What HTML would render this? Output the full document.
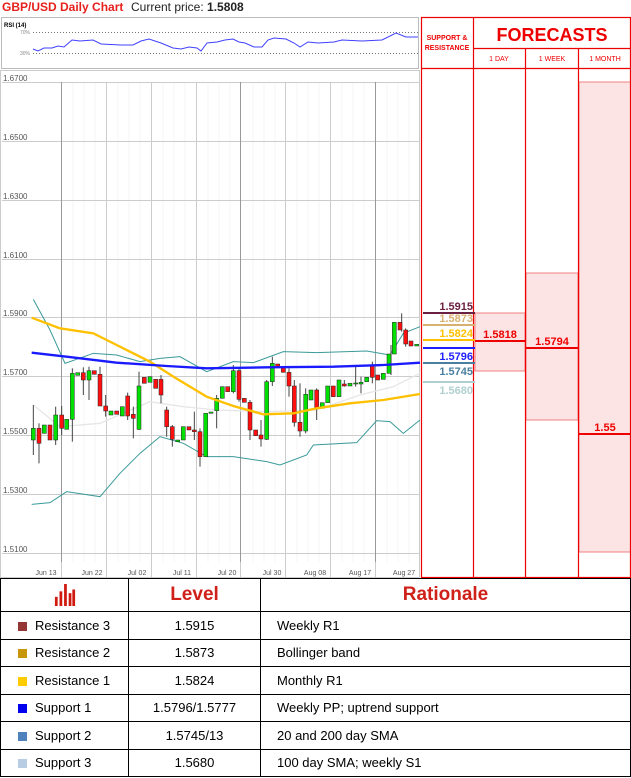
<!DOCTYPE html>
<html><head><meta charset="utf-8"><style>
*{margin:0;padding:0;box-sizing:border-box}
body{width:631px;height:778px;background:#fff;font-family:"Liberation Sans",sans-serif;position:relative;overflow:hidden}
.abs{position:absolute}
table{border-collapse:collapse;position:absolute;left:0;top:578px;width:631px}
td{border:1px solid #000;font-size:13px;height:27.5px}
.sw{display:inline-block;width:9px;height:9px;margin:0 8px 0 17px;vertical-align:-1px}
</style></head><body>
<div class="abs" style="left:2px;top:0;font-size:12px;font-weight:bold;color:#e8201c">GBP/USD Daily Chart</div>
<div class="abs" style="left:131px;top:0;font-size:12px;color:#222">Current price: <b>1.5808</b></div>

<svg class="abs" style="left:0;top:0" width="631" height="578">
<rect x="1.5" y="17.5" width="417" height="51" fill="#fff" stroke="#bbb"/>
<text x="4" y="27" font-size="6" font-weight="bold" font-family="Liberation Sans">RSI (14)</text>
<text x="20" y="34" font-size="5" fill="#888" font-family="Liberation Sans">70%</text>
<text x="20" y="55" font-size="5" fill="#888" font-family="Liberation Sans">30%</text>
<line x1="33" y1="32.5" x2="418" y2="32.5" stroke="#777" stroke-dasharray="1,2"/>
<line x1="33" y1="53.5" x2="418" y2="53.5" stroke="#777" stroke-dasharray="1,2"/>
<polyline fill="none" stroke="#4040ff" stroke-width="1" points="33,49 38,51 44,48 52,48 58,46 64,47 72,40 80,41 93,40 101,44 121,45 133,45 141,41 149,39 161,43 173,48 181,49 189,47 197,48 201,51 207,43 217,42 225,40 233,39 239,42 245,43 254,47 262,47 268,40 274,38 286,39 294,43 300,47 308,42 318,43 334,42 342,40 362,41 382,40 396,33 406,37 418,37"/>

<rect x="0.5" y="70.5" width="419" height="507" fill="#fff" stroke="#ccc"/>
<g stroke="#f6f6f6">
<line x1="73" y1="82" x2="73" y2="562"/><line x1="84" y1="82" x2="84" y2="562"/><line x1="95" y1="82" x2="95" y2="562"/>
<line x1="118" y1="82" x2="118" y2="562"/><line x1="129" y1="82" x2="129" y2="562"/><line x1="140" y1="82" x2="140" y2="562"/>
<line x1="163" y1="82" x2="163" y2="562"/><line x1="174" y1="82" x2="174" y2="562"/><line x1="185" y1="82" x2="185" y2="562"/>
<line x1="208" y1="82" x2="208" y2="562"/><line x1="219" y1="82" x2="219" y2="562"/><line x1="230" y1="82" x2="230" y2="562"/>
<line x1="253" y1="82" x2="253" y2="562"/><line x1="264" y1="82" x2="264" y2="562"/><line x1="275" y1="82" x2="275" y2="562"/>
<line x1="297" y1="82" x2="297" y2="562"/><line x1="308" y1="82" x2="308" y2="562"/><line x1="319" y1="82" x2="319" y2="562"/>
<line x1="342" y1="82" x2="342" y2="562"/><line x1="353" y1="82" x2="353" y2="562"/><line x1="364" y1="82" x2="364" y2="562"/>
<line x1="387" y1="82" x2="387" y2="562"/><line x1="398" y1="82" x2="398" y2="562"/><line x1="409" y1="82" x2="409" y2="562"/>
</g>
<g stroke="#ccc">
<line x1="2" y1="82.5" x2="419" y2="82.5"/><line x1="2" y1="141.5" x2="419" y2="141.5"/><line x1="2" y1="200.5" x2="419" y2="200.5"/><line x1="2" y1="259.5" x2="419" y2="259.5"/><line x1="2" y1="317.5" x2="419" y2="317.5"/><line x1="2" y1="376.5" x2="419" y2="376.5"/><line x1="2" y1="435.5" x2="419" y2="435.5"/><line x1="2" y1="494.5" x2="419" y2="494.5"/><line x1="2" y1="553.5" x2="419" y2="553.5"/>
<line x1="106.5" y1="82" x2="106.5" y2="578"/><line x1="151.5" y1="82" x2="151.5" y2="578"/><line x1="196.5" y1="82" x2="196.5" y2="578"/><line x1="285.5" y1="82" x2="285.5" y2="578"/><line x1="330.5" y1="82" x2="330.5" y2="578"/><line x1="61.5" y1="562" x2="61.5" y2="578"/><line x1="240.5" y1="562" x2="240.5" y2="578"/><line x1="375.5" y1="562" x2="375.5" y2="578"/>
</g>
<g stroke="#999"><line x1="61.5" y1="82" x2="61.5" y2="562"/><line x1="240.5" y1="82" x2="240.5" y2="562"/><line x1="375.5" y1="82" x2="375.5" y2="562"/></g>
<g font-size="8" fill="#555" font-family="Liberation Sans">
<text x="3" y="81">1.6700</text><text x="3" y="140">1.6500</text><text x="3" y="199">1.6300</text><text x="3" y="258">1.6100</text><text x="3" y="316">1.5900</text><text x="3" y="375">1.5700</text><text x="3" y="434">1.5500</text><text x="3" y="493">1.5300</text><text x="3" y="552">1.5100</text>
</g>
<g font-size="7" fill="#555" font-family="Liberation Sans" text-anchor="middle">
<text x="46" y="575">Jun 13</text><text x="92" y="575">Jun 22</text><text x="137" y="575">Jul 02</text><text x="182" y="575">Jul 11</text><text x="227" y="575">Jul 20</text><text x="272" y="575">Jul 30</text><text x="315" y="575">Aug 08</text><text x="360" y="575">Aug 17</text><text x="404" y="575">Aug 27</text>
</g>

<g transform="translate(0,280) scale(0.33333)">
<polyline fill="none" stroke="#e6e6e6" stroke-width="4" points="100,375 180,440 300,430 450,365 550,380 650,390 800,395 950,390 1080,345 1180,320 1260,280"/>
<polyline fill="none" stroke="#3a9a9a" stroke-width="3" points="100,58 150,150 195,250 280,220 350,225 420,245 480,235 540,230 620,275 700,245 760,248 850,215 950,218 1100,213 1170,225 1210,160 1260,140"/>
<polyline fill="none" stroke="#3a9a9a" stroke-width="3" points="95,673 150,668 200,635 300,650 360,580 420,520 480,470 550,490 620,530 700,530 800,545 840,555 920,525 940,495 1070,488 1130,422 1170,425 1210,460 1260,420"/>
<g stroke="#444" stroke-width="3">
<line x1="100" y1="375" x2="100" y2="525"/><line x1="117" y1="430" x2="117" y2="550"/><line x1="167" y1="380" x2="167" y2="495"/><line x1="185" y1="378" x2="185" y2="465"/><line x1="217" y1="265" x2="217" y2="485"/><line x1="250" y1="262" x2="250" y2="345"/><line x1="267" y1="260" x2="267" y2="360"/><line x1="300" y1="260" x2="300" y2="378"/><line x1="317" y1="345" x2="317" y2="410"/><line x1="383" y1="338" x2="383" y2="420"/><line x1="400" y1="380" x2="400" y2="475"/><line x1="417" y1="275" x2="417" y2="450"/><line x1="483" y1="285" x2="483" y2="370"/><line x1="500" y1="380" x2="500" y2="470"/><line x1="517" y1="435" x2="517" y2="500"/><line x1="583" y1="395" x2="583" y2="480"/><line x1="600" y1="445" x2="600" y2="560"/><line x1="650" y1="345" x2="650" y2="445"/><line x1="700" y1="255" x2="700" y2="340"/><line x1="717" y1="265" x2="717" y2="365"/><line x1="750" y1="360" x2="750" y2="480"/><line x1="783" y1="420" x2="783" y2="500"/><line x1="800" y1="300" x2="800" y2="480"/><line x1="817" y1="230" x2="817" y2="318"/><line x1="867" y1="265" x2="867" y2="350"/><line x1="883" y1="300" x2="883" y2="440"/><line x1="900" y1="310" x2="900" y2="470"/><line x1="917" y1="325" x2="917" y2="460"/><line x1="950" y1="325" x2="950" y2="420"/><line x1="1033" y1="300" x2="1033" y2="320"/><line x1="1067" y1="260" x2="1067" y2="320"/><line x1="1083" y1="290" x2="1083" y2="340"/><line x1="1117" y1="245" x2="1117" y2="310"/><line x1="1173" y1="195" x2="1173" y2="285"/><line x1="1205" y1="100" x2="1205" y2="155"/><line x1="1217" y1="145" x2="1217" y2="200"/>
</g>
<g fill="#00e000" stroke="#222" stroke-width="1.5">
<rect x="94" y="445" width="12" height="35"/><rect x="127" y="435" width="12" height="25"/><rect x="161" y="405" width="12" height="75"/><rect x="194" y="418" width="12" height="30"/><rect x="211" y="280" width="12" height="138"/><rect x="227" y="278" width="12" height="8"/><rect x="261" y="272" width="12" height="28"/><rect x="327" y="393" width="12" height="12"/><rect x="361" y="380" width="12" height="28"/><rect x="411" y="318" width="12" height="130"/><rect x="444" y="290" width="12" height="17"/><rect x="527" y="480" width="12" height="5"/><rect x="544" y="440" width="12" height="40"/><rect x="611" y="400" width="12" height="130"/><rect x="627" y="396" width="12" height="4"/><rect x="644" y="355" width="12" height="37"/><rect x="661" y="320" width="12" height="35"/><rect x="694" y="272" width="12" height="63"/><rect x="794" y="305" width="12" height="173"/><rect x="811" y="250" width="12" height="55"/><rect x="911" y="343" width="12" height="110"/><rect x="927" y="330" width="12" height="30"/><rect x="961" y="368" width="12" height="17"/><rect x="977" y="318" width="12" height="50"/><rect x="1011" y="300" width="12" height="50"/><rect x="1044" y="310" width="12" height="8"/><rect x="1061" y="309" width="12" height="3"/><rect x="1077" y="307" width="12" height="5"/><rect x="1094" y="292" width="12" height="13"/><rect x="1144" y="280" width="12" height="18"/><rect x="1161" y="222" width="12" height="58"/><rect x="1177" y="127" width="12" height="95"/><rect x="1244" y="193" width="12" height="5"/>
</g>
<g fill="#ff1010" stroke="#222" stroke-width="1.5">
<rect x="111" y="445" width="12" height="45"/><rect x="144" y="435" width="12" height="45"/><rect x="179" y="405" width="12" height="40"/><rect x="244" y="278" width="12" height="22"/><rect x="277" y="272" width="12" height="11"/><rect x="294" y="283" width="12" height="95"/><rect x="311" y="378" width="12" height="15"/><rect x="344" y="393" width="12" height="10"/><rect x="377" y="348" width="12" height="60"/><rect x="394" y="403" width="12" height="12"/><rect x="427" y="292" width="12" height="18"/><rect x="461" y="298" width="12" height="27"/><rect x="477" y="298" width="12" height="47"/><rect x="494" y="390" width="12" height="50"/><rect x="511" y="440" width="12" height="38"/><rect x="561" y="440" width="12" height="10"/><rect x="577" y="450" width="12" height="5"/><rect x="594" y="455" width="12" height="75"/><rect x="677" y="320" width="12" height="15"/><rect x="711" y="272" width="12" height="86"/><rect x="727" y="355" width="12" height="12"/><rect x="744" y="367" width="12" height="83"/><rect x="761" y="450" width="12" height="17"/><rect x="777" y="465" width="12" height="12"/><rect x="827" y="252" width="12" height="10"/><rect x="844" y="262" width="12" height="15"/><rect x="861" y="277" width="12" height="41"/><rect x="877" y="318" width="12" height="109"/><rect x="894" y="427" width="12" height="26"/><rect x="944" y="330" width="12" height="55"/><rect x="994" y="318" width="12" height="32"/><rect x="1027" y="312" width="12" height="6"/><rect x="1111" y="258" width="12" height="34"/><rect x="1127" y="285" width="12" height="15"/><rect x="1194" y="127" width="12" height="23"/><rect x="1211" y="150" width="12" height="42"/><rect x="1227" y="183" width="12" height="15"/>
</g>
<polyline fill="none" stroke="#ffc000" stroke-width="7" points="95,113 180,145 280,160 350,195 450,245 520,290 620,350 700,378 790,403 880,400 950,385 1050,370 1150,360 1260,342"/>
<polyline fill="none" stroke="#1a1aff" stroke-width="7" points="95,218 200,230 350,248 500,258 620,265 800,262 1000,260 1150,255 1260,248"/>
</g>

<rect x="475" y="313" width="50" height="58" fill="#fde4e4" stroke="#f08080"/>
<rect x="526" y="273" width="52" height="147" fill="#fde4e4" stroke="#f08080"/>
<rect x="579" y="82" width="52" height="470" fill="#fde4e4" stroke="#f08080"/>
<g stroke="#e00" stroke-width="1.2" fill="none">
<rect x="421.5" y="17.5" width="209" height="560"/>
<line x1="473.5" y1="17" x2="473.5" y2="578"/>
<line x1="473" y1="48.5" x2="631" y2="48.5"/>
<line x1="421" y1="68.5" x2="631" y2="68.5"/>
<line x1="525.5" y1="48" x2="525.5" y2="578"/>
<line x1="578.5" y1="48" x2="578.5" y2="578"/>
</g>
<g font-family="Liberation Sans" font-weight="bold" fill="#e00" text-anchor="middle">
<text x="447" y="40" font-size="7">SUPPORT &amp;</text><text x="447" y="50" font-size="7">RESISTANCE</text>
<text x="552" y="41" font-size="18">FORECASTS</text>
<text x="499" y="61" font-size="7" font-weight="normal">1 DAY</text><text x="552" y="61" font-size="7" font-weight="normal">1 WEEK</text><text x="605" y="61" font-size="7" font-weight="normal">1 MONTH</text>
</g>
<g stroke-width="2">
<line x1="423" y1="313" x2="475" y2="313" stroke="#6a2040"/>
<line x1="423" y1="325" x2="475" y2="325" stroke="#d8b070"/>
<line x1="423" y1="340" x2="475" y2="340" stroke="#ffc000"/>
<line x1="423" y1="348" x2="475" y2="348" stroke="#2020ff"/>
<line x1="423" y1="363" x2="475" y2="363" stroke="#4a7fa0"/>
<line x1="423" y1="382" x2="475" y2="382" stroke="#b0d0d0"/>
<line x1="475" y1="341" x2="525" y2="341" stroke="#e00"/>
<line x1="526" y1="348" x2="578" y2="348" stroke="#e00"/>
<line x1="579" y1="434" x2="631" y2="434" stroke="#e00"/>
</g>
<g font-family="Liberation Sans" font-weight="bold" font-size="11" text-anchor="end">
<text x="473" y="310" fill="#6a2040">1.5915</text>
<text x="473" y="322" fill="#d8b070">1.5873</text>
<text x="473" y="337" fill="#ffc000">1.5824</text>
<text x="473" y="360" fill="#2020ff">1.5796</text>
<text x="473" y="375" fill="#4a7fa0">1.5745</text>
<text x="473" y="394" fill="#b0d0d0">1.5680</text>
</g>
<g font-family="Liberation Sans" font-weight="bold" font-size="11" text-anchor="middle" fill="#e00">
<text x="500" y="338">1.5818</text><text x="552" y="345">1.5794</text><text x="605" y="431">1.55</text>
</g>
</svg>

<table>
<tr style="height:33px"><td style="width:128px;text-align:center">
<svg width="22" height="22" viewBox="0 0 24 24" style="vertical-align:middle"><g fill="#d01a10"><rect x="1" y="14" width="3" height="10"/><rect x="6" y="8" width="3" height="16"/><rect x="11" y="0" width="3" height="24"/><rect x="16" y="10" width="3" height="14"/><rect x="20" y="6" width="3" height="18"/></g></svg></td>
<td style="width:132px;text-align:center;font-size:19px;font-weight:bold;color:#d0201a">Level</td>
<td style="text-align:center;font-size:19px;font-weight:bold;color:#d0201a">Rationale</td></tr>
<tr><td><span class="sw" style="background:#943634"></span>Resistance 3</td><td style="text-align:center">1.5915</td><td style="padding-left:16px">Weekly R1</td></tr>
<tr><td><span class="sw" style="background:#c8960a"></span>Resistance 2</td><td style="text-align:center">1.5873</td><td style="padding-left:16px">Bollinger band</td></tr>
<tr><td><span class="sw" style="background:#ffcc00"></span>Resistance 1</td><td style="text-align:center">1.5824</td><td style="padding-left:16px">Monthly R1</td></tr>
<tr><td><span class="sw" style="background:#0000ee"></span>Support 1</td><td style="text-align:center">1.5796/1.5777</td><td style="padding-left:16px">Weekly PP; uptrend support</td></tr>
<tr><td><span class="sw" style="background:#4f81bd"></span>Support 2</td><td style="text-align:center">1.5745/13</td><td style="padding-left:16px">20 and 200 day SMA</td></tr>
<tr><td><span class="sw" style="background:#b8cce4"></span>Support 3</td><td style="text-align:center">1.5680</td><td style="padding-left:16px">100 day SMA; weekly S1</td></tr>
</table>
</body></html>
